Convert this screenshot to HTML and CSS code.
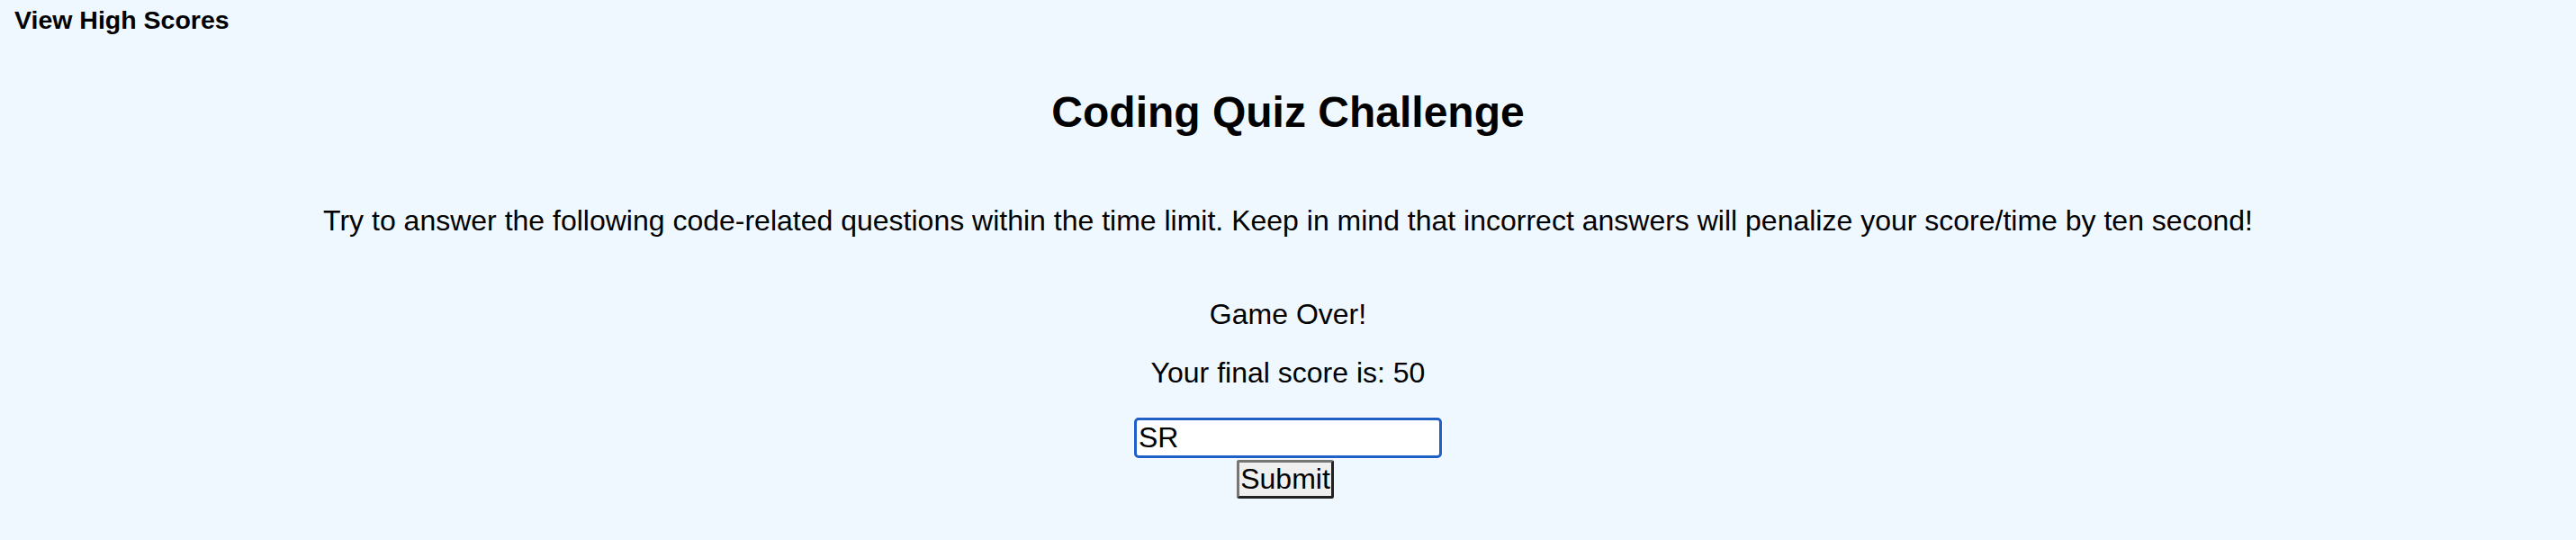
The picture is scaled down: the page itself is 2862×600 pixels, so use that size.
FILE: index.html
```html
<!DOCTYPE html>
<html lang="en">
<head>
<meta charset="utf-8">
<title>Coding Quiz Challenge</title>
<link rel="stylesheet" href="styles.css">
</head>
<body>
<header class="topbar">
  <a class="highscores">View High Scores</a>
</header>
<main class="quiz">
  <h1 class="title">Coding Quiz Challenge</h1>
  <p class="intro">Try to answer the following code-related questions within the time limit. Keep in mind that incorrect answers will penalize your score/time by ten second!</p>
  <section class="result">
    <p class="result-line">Game Over!</p>
    <p class="result-line score">Your final score is: 50</p>
    <form class="initials-form">
      <input class="initials" type="text" value="SR">
      <button class="submit" type="button">Submit</button>
    </form>
  </section>
</main>
</body>
</html>
```

FILE: styles.css
```css
html, body {
  margin: 0;
  padding: 0;
}
body {
  background: #f0f8ff;
  color: #000;
  font-family: "Liberation Sans", Arial, Helvetica, sans-serif;
}
.topbar {
  padding: 6px 16px 0;
}
.highscores {
  font-size: 28.5px;
  font-weight: bold;
  line-height: 33px;
  color: #000;
}
.quiz {
  display: flex;
  flex-direction: column;
  align-items: center;
  text-align: center;
}
.title {
  margin: 58px 0 0;
  font-size: 48px;
  line-height: 55px;
  font-weight: bold;
}
.intro {
  margin: 75px 0 0;
  font-size: 32px;
  line-height: 37px;
}
.result {
  margin-top: 67px;
  display: flex;
  flex-direction: column;
  align-items: center;
}
.result-line {
  margin: 0;
  font-size: 32px;
  line-height: 37px;
}
.score {
  margin-top: 28px;
}
.initials-form {
  margin-top: 31px;
  display: flex;
  flex-direction: column;
  align-items: center;
}
.initials {
  box-sizing: border-box;
  width: 342px;
  height: 45px;
  margin: 0;
  padding: 1px 2px;
  border: 3px solid #1f5fc8;
  border-radius: 5px;
  background: #fff;
  box-shadow: 0 0 0 1px #fff;
  font-family: "Liberation Sans", Arial, sans-serif;
  font-size: 32px;
  line-height: 37px;
  color: #000;
  outline: none;
}
.submit {
  box-sizing: border-box;
  height: 43px;
  margin: 2px 6px 0 0;
  padding: 0 1px;
  border: 3px solid;
  border-color: #767676 #222 #222 #767676;
  border-radius: 3px;
  background: #efefef;
  font-family: "Liberation Sans", Arial, sans-serif;
  font-size: 32px;
  line-height: 37px;
  color: #000;
}
```
